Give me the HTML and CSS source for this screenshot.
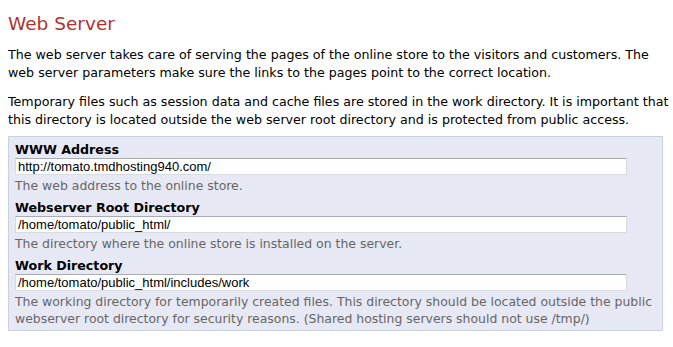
FILE: index.html
```html
<!DOCTYPE html>
<html lang="en">
<head>
  <meta charset="UTF-8" />
  <title>Web Server</title>
  <link rel="stylesheet" href="styles.css">
</head>
<body>
  <h1 class="page-title">Web Server</h1>
  <p class="intro">The web server takes care of serving the pages of the online store to the visitors and customers. The web server parameters make sure the links to the pages point to the correct location.</p>
  <p class="intro">Temporary files such as session data and cache files are stored in the work directory. It is important that this directory is located outside the web server root directory and is protected from public access.</p>

  <div class="settings-box">
    <div class="field">
      <label for="www_address">WWW Address</label>
      <input type="text" id="www_address" value="http://tomato.tmdhosting940.com/" />
      <div class="help">The web address to the online store.</div>
    </div>
    <div class="field">
      <label for="root_dir">Webserver Root Directory</label>
      <input type="text" id="root_dir" value="/home/tomato/public_html/" />
      <div class="help">The directory where the online store is installed on the server.</div>
    </div>
    <div class="field">
      <label for="work_dir">Work Directory</label>
      <input type="text" id="work_dir" value="/home/tomato/public_html/includes/work" />
      <div class="help">The working directory for temporarily created files. This directory should be located outside the public webserver root directory for security reasons. (Shared hosting servers should not use /tmp/)</div>
    </div>
  </div>
</body>
</html>
```

FILE: styles.css
```css
body {
  margin: 8px 0 8px 8px;
  font-family: Verdana, "DejaVu Sans", sans-serif;
  font-size: 12.65px;
  color: #000;
  background: #fff;
}
.page-title {
  margin: 4px 0 10px;
  font-size: 18.5px;
  font-weight: normal;
  color: #b2312f;
  line-height: 24px;
}
.intro {
  margin: 0;
  line-height: 18px;
}
.intro + .intro {
  margin-top: 11px;
}
.settings-box {
  margin-top: 7px;
  width: 641px;
  padding: 4px 6px 3px 6px;
  background: #e6e9f4;
  border: 1px solid #c9d0e2;
}
.field label {
  display: block;
  font-weight: bold;
  line-height: 17px;
}
.field input {
  display: block;
  box-sizing: border-box;
  width: 612px;
  height: 17px;
  margin: 0;
  padding: 0 2px;
  font-family: Arial, "Liberation Sans", sans-serif;
  font-size: 13px;
  border: 1px solid #d8dbe2;
  border-top-color: #a8abb2;
  background: #fff;
}
.help {
  color: #666;
  font-size: 12.45px;
  line-height: 17px;
  padding-top: 2px;
  margin-bottom: 5px;
}
.field:last-child .help {
  margin-bottom: 0;
}
```
